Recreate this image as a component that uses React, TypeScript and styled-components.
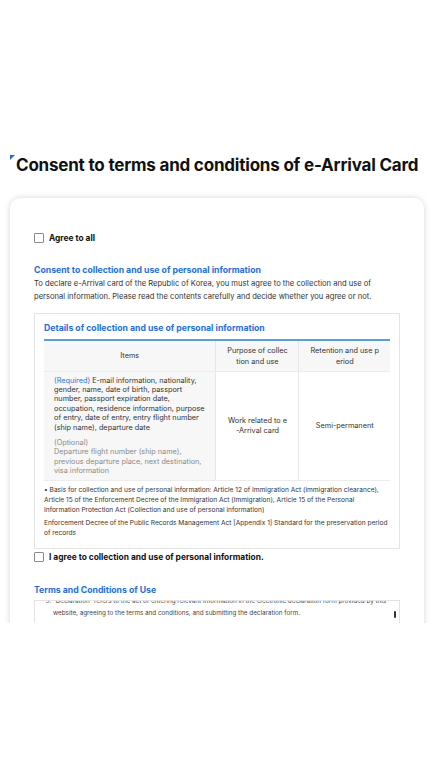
import React from 'react';
import styled, { createGlobalStyle } from 'styled-components';

const GlobalStyle = createGlobalStyle`
  html, body {
    margin: 0;
    padding: 0;
    background: #ffffff;
  }
  body {
    font-family: Inter, "Noto Sans", "Liberation Sans", sans-serif;
    color: #222222;
  }
  * {
    box-sizing: border-box;
  }
`;

const Viewport = styled.div`
  height: 623px;
  overflow: hidden;
  background: #ffffff;
  padding-top: 153px;
`;

const PageTitle = styled.h1`
  position: relative;
  margin: 0 0 21px 16px;
  font-size: 17px;
  font-weight: 700;
  letter-spacing: -0.2px;
  line-height: 24px;
  color: #111111;
  white-space: nowrap;
`;

const TitleMark = styled.svg`
  position: absolute;
  left: -6px;
  top: 2px;
`;

const Card = styled.div`
  margin: 0 8px 0 10px;
  background: #ffffff;
  border-radius: 10px;
  box-shadow: 0 0 6px rgba(0, 0, 0, 0.16);
  padding: 34px 24px 40px 24px;
`;

const CheckRow = styled.label<{ $gap?: number }>`
  display: flex;
  align-items: center;
  gap: 5px;
  margin-top: ${(p) => p.$gap ?? 0}px;
  font-size: 8.4px;
  line-height: 12px;
  font-weight: 700;
  color: #111111;
`;

const Box = styled.span`
  width: 10px;
  height: 10px;
  border: 1px solid #8a8a8a;
  border-radius: 1px;
  background: #ffffff;
  flex: none;
`;

const SectionTitle = styled.h2<{ $top: number }>`
  margin: ${(p) => p.$top}px 0 0 0;
  font-size: 8.7px;
  font-weight: 700;
  color: #1f6fd6;
  line-height: 14px;
`;

const Lead = styled.p`
  margin: 0;
  font-size: 7.6px;
  line-height: 13px;
  color: #333333;
`;

const DetailBox = styled.div`
  margin-top: 10px;
  border: 1px solid #e3e3e3;
  padding: 7px 9px 10px 9px;
`;

const DetailTitle = styled.h3`
  margin: 0 0 4px 0;
  font-size: 8.7px;
  font-weight: 700;
  color: #1f6fd6;
  line-height: 14px;
`;

const Table = styled.table`
  width: 100%;
  border-collapse: collapse;
  border-top: 2px solid #5aa0d8;
  table-layout: fixed;
  font-size: 7.3px;
  color: #333333;
`;

const Th = styled.th<{ $w: string }>`
  width: ${(p) => p.$w};
  height: 31px;
  background: #f7f7f7;
  font-weight: 400;
  line-height: 11px;
  text-align: center;
  padding: 0 10px;
  word-break: break-all;
  border-left: 1px solid #e6e6e6;
  border-bottom: 1px solid #ececec;
  &:first-child {
    border-left: none;
  }
`;

const Td = styled.td<{ $shade?: boolean }>`
  background: ${(p) => (p.$shade ? '#f7f7f7' : '#ffffff')};
  text-align: ${(p) => (p.$shade ? 'left' : 'center')};
  vertical-align: middle;
  line-height: 9.4px;
  padding: 4px 11px 4px 11px;
  word-break: break-all;
  border-left: 1px solid #e6e6e6;
  border-bottom: 1px solid #ececec;
  &:first-child {
    border-left: none;
    word-break: normal;
    padding: 4px 5px 4px 10px;
  }
`;

const Required = styled.span`
  color: #2f74d0;
`;

const Optional = styled.div`
  margin-top: 6px;
  color: #8a8a8a;
`;

const Note = styled.p<{ $top: number }>`
  margin: ${(p) => p.$top}px 0 0 0;
  font-size: 6.6px;
  line-height: 10px;
  color: #333333;
`;

const ScrollBox = styled.div`
  position: relative;
  margin-top: 3px;
  height: 60px;
  border: 1px solid #e3e3e3;
  overflow: hidden;
`;

const ScrollText = styled.ol`
  margin: -6px 0 0 0;
  padding: 0 12px 0 18px;
  font-size: 6.3px;
  line-height: 12px;
  color: #444444;
  & li {
    margin-bottom: 8px;
  }
`;

const Thumb = styled.span`
  position: absolute;
  right: 3px;
  top: 10px;
  width: 2px;
  height: 7px;
  border-radius: 1px;
  background: #333333;
`;

export default function App() {
  return (
    <>
      <GlobalStyle />
      <Viewport>
        <PageTitle>
          <TitleMark width="5" height="5" viewBox="0 0 5 5">
            <polygon points="0,0 5,0 0,5" fill="#1f6fd6" />
          </TitleMark>
          Consent to terms and conditions of e-Arrival Card
        </PageTitle>
        <Card>
          <CheckRow>
            <Box />
            Agree to all
          </CheckRow>

          <SectionTitle $top={19}>Consent to collection and use of personal information</SectionTitle>
          <Lead>
            To declare e-Arrival card of the Republic of Korea, you must agree to the collection and use of
            personal information. Please read the contents carefully and decide whether you agree or not.
          </Lead>

          <DetailBox>
            <DetailTitle>Details of collection and use of personal information</DetailTitle>
            <Table>
              <thead>
                <tr>
                  <Th $w="49.7%">Items</Th>
                  <Th $w="24%">Purpose of collection and use</Th>
                  <Th $w="26.3%">Retention and use period</Th>
                </tr>
              </thead>
              <tbody>
                <tr>
                  <Td $shade>
                    <Required>(Required)</Required> E-mail information, nationality, gender, name, date of birth,
                    passport number, passport expiration date, occupation, residence information, purpose of
                    entry, date of entry, entry flight number (ship name), departure date
                    <Optional>
                      (Optional)
                      <br />
                      Departure flight number (ship name), previous departure place, next destination, visa
                      information
                    </Optional>
                  </Td>
                  <Td>Work related to e-Arrival card</Td>
                  <Td>Semi-permanent</Td>
                </tr>
              </tbody>
            </Table>
            <Note $top={4}>
              • Basis for collection and use of personal information: Article 12 of Immigration Act (immigration
              clearance), Article 15 of the Enforcement Decree of the Immigration Act (Immigration), Article 15 of
              the Personal Information Protection Act (Collection and use of personal information)
            </Note>
            <Note $top={3}>
              Enforcement Decree of the Public Records Management Act [Appendix 1] Standard for the preservation
              period of records
            </Note>
          </DetailBox>

          <CheckRow $gap={2}>
            <Box />
            I agree to collection and use of personal information.
          </CheckRow>

          <SectionTitle $top={20}>Terms and Conditions of Use</SectionTitle>
          <ScrollBox>
            <ScrollText start={3}>
              <li>
                “Declaration” refers to the act of entering relevant information in the electronic declaration form
                provided by this website, agreeing to the terms and conditions, and submitting the declaration form.
              </li>
              <li>
                “Member” refers to a person who has agreed to these terms and conditions and submitted a
                declaration.
              </li>
            </ScrollText>
            <Thumb />
          </ScrollBox>
        </Card>
      </Viewport>
    </>
  );
}
